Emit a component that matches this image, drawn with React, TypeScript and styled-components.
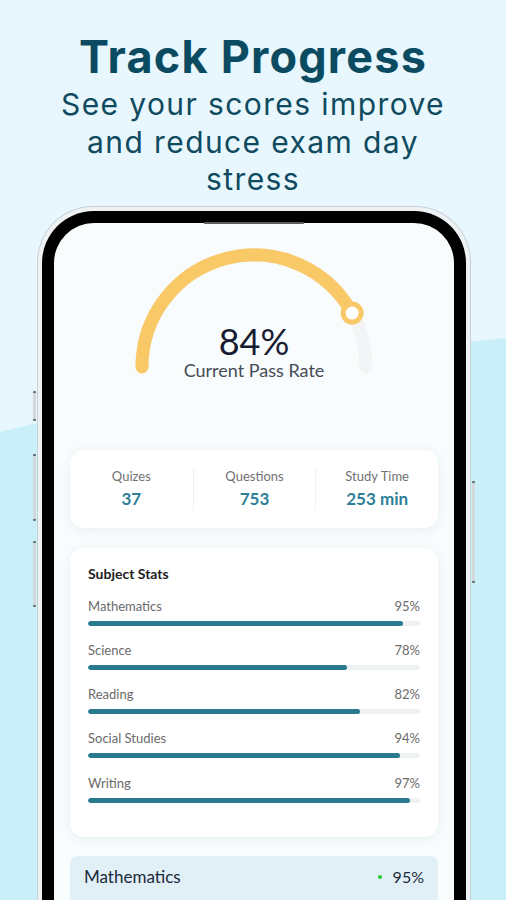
import React, { FunctionComponent } from "react";
import styled, { createGlobalStyle } from "styled-components";

const GlobalStyle = createGlobalStyle`
  html, body {
    margin: 0;
    padding: 0;
    background: #e7f7fd;
  }
  * {
    box-sizing: border-box;
  }
`

const Page = styled.div`
  position: relative;
  width: 506px;
  height: 900px;
  overflow: hidden;
  background: #e7f7fd;
`

const Wave = styled.svg`
  position: absolute;
  left: 0;
  top: 0;
  z-index: 0;
`

const Content = styled.div`
  position: relative;
  z-index: 1;
`

const Header = styled.header`
  padding-top: 31px;
  text-align: center;
  color: #0d4b61;
  font-family: Inter, "Open Sans", sans-serif;
`

const Title = styled.h1`
  margin: 0;
  font-size: 45px;
  line-height: 52px;
  font-weight: 700;
  letter-spacing: 1.2px;
  color: #0b4b62;
`

const Subtitle = styled.p`
  margin: 3px auto 0;
  width: 410px;
  font-size: 30px;
  line-height: 37.5px;
  font-weight: 400;
  letter-spacing: 1.4px;
  color: #0f4a5f;
`

const PhoneOuter = styled.div`
  position: relative;
  margin: 7px 0 0 37px;
  width: 434px;
  border: 1.5px solid #c8d0d4;
  border-bottom: none;
  border-radius: 56px 56px 0 0;
  padding: 4px 4px 0;
  background: #eef2f4;
`

const SideButton = styled.div<{ $side: "left" | "right"; $top: number; $height: number }>`
  position: absolute;
  ${props => props.$side === "left" ? "left: -5px;" : "right: -5px;"}
  top: ${props => props.$top}px;
  width: 3px;
  height: ${props => props.$height}px;
  background: #d3d8db;
  border-top: 2px solid #6b7074;
  border-bottom: 2px solid #6b7074;
  border-radius: 1px;
`

const Bezel = styled.div`
  position: relative;
  background: #000;
  border-radius: 52px 52px 0 0;
  padding: 12px 12px 0;
`

const Speaker = styled.div`
  position: absolute;
  top: 11px;
  left: 50%;
  transform: translateX(-50%);
  width: 100px;
  height: 2px;
  background: #5c5f62;
  border-radius: 1px;
`

const Screen = styled.div`
  min-height: 700px;
  background: #f8fcfd;
  border-radius: 40px 40px 0 0;
  padding: 14px 16px 0;
  font-family: Lato, "Open Sans", sans-serif;
`

const GaugeWrap = styled.div`
  position: relative;
  width: 260px;
  height: 150px;
  margin: 0 auto;
`

const GaugeText = styled.div`
  position: absolute;
  top: 84px;
  left: 0;
  right: 0;
  text-align: center;
`

const GaugeValue = styled.div`
  font-size: 36px;
  line-height: 40px;
  color: #181c33;
`

const GaugeCaption = styled.div`
  margin-top: -2px;
  font-size: 18px;
  line-height: 22px;
  color: #464b58;
`

const Card = styled.div`
  background: #fff;
  border-radius: 14px;
  box-shadow: 0 2px 12px rgba(20, 60, 80, 0.07);
`

const StatsCard = styled(Card)`
  margin-top: 63px;
  display: grid;
  grid-template-columns: 1fr 1fr 1fr;
  padding: 18px 0;
`

const StatCol = styled.div`
  text-align: center;
  & + & {
    border-left: 1px solid #eef1f2;
  }
`

const StatLabel = styled.div`
  font-size: 13px;
  line-height: 16px;
  color: #717171;
`

const StatValue = styled.div`
  margin-top: 4px;
  font-size: 17px;
  line-height: 22px;
  font-weight: 700;
  color: #2e7f98;
`

const SubjectCard = styled(Card)`
  margin-top: 20px;
  padding: 17px 18px 34px;
`

const SubjectTitle = styled.h3`
  margin: 0;
  font-size: 14px;
  line-height: 18px;
  font-weight: 700;
  color: #222;
`

const SubjectList = styled.div`
  margin-top: 15px;
  display: flex;
  flex-direction: column;
  gap: 16.3px;
`

const SubjectRow = styled.div``

const SubjectHead = styled.div`
  display: flex;
  justify-content: space-between;
  font-size: 13px;
  line-height: 16px;
  color: #6a6a6a;
`

const Track = styled.div`
  margin-top: 7px;
  height: 5px;
  border-radius: 3px;
  background: #eff2f3;
  overflow: hidden;
`

const Fill = styled.div`
  height: 100%;
  border-radius: 3px;
  background: #2a7a8f;
`

const Highlight = styled.div`
  margin-top: 19px;
  height: 60px;
  padding: 0 14px;
  display: flex;
  align-items: flex-start;
  background: #e1eff7;
  border-radius: 8px 8px 0 0;
`

const HighlightName = styled.div`
  flex: 1;
  font-size: 17px;
  line-height: 42px;
  color: #1b2a39;
`

const Dot = styled.span`
  width: 4px;
  height: 4px;
  margin: 19px 11px 0 0;
  border-radius: 50%;
  background: #22cc33;
`

const HighlightValue = styled.div`
  font-size: 16px;
  line-height: 42px;
  color: #1b2a39;
`

const subjects = [
  { name: "Mathematics", value: 95 },
  { name: "Science", value: 78 },
  { name: "Reading", value: 82 },
  { name: "Social Studies", value: 94 },
  { name: "Writing", value: 97 },
]

const stats = [
  { label: "Quizes", value: "37" },
  { label: "Questions", value: "753" },
  { label: "Study Time", value: "253 min" },
]

const Gauge: FunctionComponent<{ value: number }> = ({ value }) => {
  const cx = 130
  const cy = 130
  const r = 112
  const angle = Math.PI - (value / 100) * Math.PI
  const ex = cx + r * Math.cos(angle)
  const ey = cy - r * Math.sin(angle)

  return <GaugeWrap>
    <svg width="260" height="150" viewBox="0 0 260 150">
      <path d={`M${cx - r},${cy} A${r},${r} 0 0 1 ${cx + r},${cy}`} fill="none" stroke="#f3f4f5" strokeWidth="13" strokeLinecap="round" />
      <path d={`M${cx - r},${cy} A${r},${r} 0 0 1 ${ex},${ey}`} fill="none" stroke="#f9c867" strokeWidth="13" strokeLinecap="round" />
      <circle cx={ex} cy={ey} r="9" fill="#fff" stroke="#f9c867" strokeWidth="5" />
    </svg>
    <GaugeText>
      <GaugeValue>{value}%</GaugeValue>
      <GaugeCaption>Current Pass Rate</GaugeCaption>
    </GaugeText>
  </GaugeWrap>
}

const App: FunctionComponent = () => {
  return <Page>
    <GlobalStyle />
    <Wave width="506" height="900" viewBox="0 0 506 900">
      <path d="M0,432 C150,395 330,355 506,338 L506,900 L0,900 Z" fill="#c9eff9" />
    </Wave>
    <Content>
      <Header>
        <Title>Track Progress</Title>
        <Subtitle>See your scores improve and reduce exam day stress</Subtitle>
      </Header>
      <PhoneOuter>
        <SideButton $side="left" $top={184} $height={30} />
        <SideButton $side="left" $top={247} $height={67} />
        <SideButton $side="left" $top={334} $height={66} />
        <SideButton $side="right" $top={274} $height={102} />
        <Bezel>
          <Speaker />
          <Screen>
            <Gauge value={84} />
            <StatsCard>
              {stats.map(s => (
                <StatCol key={s.label}>
                  <StatLabel>{s.label}</StatLabel>
                  <StatValue>{s.value}</StatValue>
                </StatCol>
              ))}
            </StatsCard>
            <SubjectCard>
              <SubjectTitle>Subject Stats</SubjectTitle>
              <SubjectList>
                {subjects.map(s => (
                  <SubjectRow key={s.name}>
                    <SubjectHead>
                      <span>{s.name}</span>
                      <span>{s.value}%</span>
                    </SubjectHead>
                    <Track>
                      <Fill style={{ width: `${s.value}%` }} />
                    </Track>
                  </SubjectRow>
                ))}
              </SubjectList>
            </SubjectCard>
            <Highlight>
              <HighlightName>Mathematics</HighlightName>
              <Dot />
              <HighlightValue>95%</HighlightValue>
            </Highlight>
          </Screen>
        </Bezel>
      </PhoneOuter>
    </Content>
  </Page>
}

export default App
